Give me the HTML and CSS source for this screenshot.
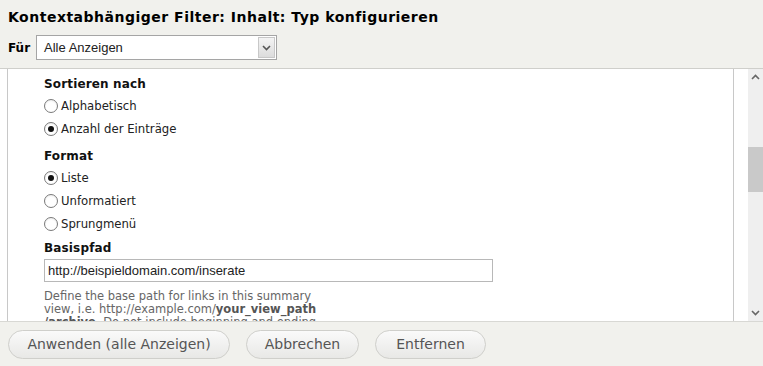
FILE: index.html
```html
<!DOCTYPE html>
<html lang="de">
<head>
<meta charset="utf-8">
<title>Kontextabhängiger Filter</title>
<link rel="stylesheet" href="styles.css">
</head>
<body>
<div class="header">
  <h1 class="title">Kontextabhängiger Filter: Inhalt: Typ konfigurieren</h1>
  <div class="for-row">
    <span class="for-label">Für</span>
    <div class="select">
      <span class="select-text">Alle Anzeigen</span>
      <span class="select-btn"><svg width="9" height="6" viewBox="0 0 9 6"><path d="M1 1 L4.5 4.5 L8 1" fill="none" stroke="#555" stroke-width="1.6"/></svg></span>
    </div>
  </div>
</div>
<div class="main">
  <div class="panel">
    <div class="form">
      <div class="heading">Sortieren nach</div>
      <label class="radio-row"><span class="radio"></span>Alphabetisch</label>
      <label class="radio-row"><span class="radio checked"></span>Anzahl der Einträge</label>
      <div class="heading heading-format">Format</div>
      <label class="radio-row"><span class="radio checked"></span>Liste</label>
      <label class="radio-row"><span class="radio"></span>Unformatiert</label>
      <label class="radio-row"><span class="radio"></span>Sprungmenü</label>
      <div class="heading heading-path">Basispfad</div>
      <div class="text-input">http://beispieldomain.com/inserate</div>
      <div class="desc">Define the base path for links in this summary view, i.e. http://example.com/<strong>your_view_path<wbr>/archive</strong>. Do not include beginning and ending forward slash. If this value is empty, views will use the first path found as the base path, in page displays, or / if no path could be found.</div>
    </div>
  </div>
  <div class="scrollbar">
    <span class="arrow"><svg width="9" height="6" viewBox="0 0 9 6"><path d="M1 5 L4.5 1.5 L8 5" fill="none" stroke="#666" stroke-width="1.6"/></svg></span>
    <div class="track"><div class="thumb"></div></div>
    <span class="arrow"><svg width="9" height="6" viewBox="0 0 9 6"><path d="M1 1 L4.5 4.5 L8 1" fill="none" stroke="#666" stroke-width="1.6"/></svg></span>
  </div>
</div>
<div class="footer">
  <button class="btn btn-apply">Anwenden (alle Anzeigen)</button>
  <button class="btn btn-cancel">Abbrechen</button>
  <button class="btn btn-remove">Entfernen</button>
</div>
</body>
</html>
```
FILE: styles.css
```css
html, body {
  margin: 0;
  padding: 0;
}
body {
  width: 763px;
  height: 366px;
  overflow: hidden;
  background: #f1f1ed;
  font-family: "DejaVu Sans", Verdana, sans-serif;
  color: #222;
}
.header {
  height: 68px;
  padding: 0 8px;
  box-sizing: border-box;
}
.title {
  margin: 0;
  padding-top: 7px;
  font-size: 14px;
  font-weight: bold;
  letter-spacing: 0.5px;
  line-height: 21px;
  color: #000;
  white-space: nowrap;
}
.for-row {
  display: flex;
  align-items: center;
  margin-top: 7px;
  gap: 6px;
}
.for-label {
  font-weight: bold;
  font-size: 12px;
  color: #000;
}
.select {
  width: 241px;
  height: 25px;
  box-sizing: border-box;
  border: 1px solid #a5a5a5;
  background: #fff;
  display: flex;
  align-items: center;
  justify-content: space-between;
}
.select-text {
  font-family: "Liberation Sans", Arial, sans-serif;
  font-size: 13px;
  color: #222;
  padding-left: 7px;
}
.select-btn {
  width: 17px;
  height: 21px;
  margin-right: 1px;
  border: 1px solid #c8c8c8;
  box-sizing: border-box;
  background: linear-gradient(#f4f4f4, #dcdcdc);
  display: flex;
  align-items: center;
  justify-content: center;
}
.main {
  height: 254px;
  box-sizing: border-box;
  border-top: 1px solid #cfcfcb;
  border-bottom: 1px solid #d8d8d4;
  background: #fff;
  display: flex;
  padding-left: 7px;
}
.panel {
  width: 727px;
  box-sizing: border-box;
  border-left: 1px solid #c8c8c8;
  border-right: 1px solid #c8c8c8;
  overflow: hidden;
}
.form {
  padding: 5px 0 0 36px;
  font-size: 11.7px;
  color: #222;
}
.heading {
  font-weight: bold;
  font-size: 12px;
  letter-spacing: 0.15px;
  line-height: 20px;
  color: #111;
}
.heading-format {
  margin-top: 6px;
}
.heading-path {
  margin-top: 3px;
}
.radio-row {
  display: flex;
  align-items: center;
  height: 23px;
}
.radio {
  width: 12px;
  height: 12px;
  border: 1px solid #7a7a7a;
  border-radius: 50%;
  background: radial-gradient(circle at 50% 60%, #fff 50%, #e2e2e2 100%);
  margin-right: 3px;
  position: relative;
  flex: none;
}
.radio.checked::after {
  content: "";
  position: absolute;
  left: 3px;
  top: 3px;
  width: 6px;
  height: 6px;
  border-radius: 50%;
  background: #111;
}
.text-input {
  margin-top: 1px;
  width: 449px;
  height: 23px;
  box-sizing: border-box;
  border: 1px solid #b8b8b8;
  font-family: "Liberation Sans", Arial, sans-serif;
  font-size: 13px;
  line-height: 21px;
  padding-left: 3px;
  color: #222;
}
.desc {
  margin-top: 8px;
  width: 290px;
  font-size: 11.5px;
  line-height: 13px;
  color: #666;
}
.desc strong {
  color: #555;
}
.scrollbar {
  margin-left: 14px;
  width: 15px;
  background: #efefef;
  display: flex;
  flex-direction: column;
  align-items: center;
}
.arrow {
  height: 16px;
  display: flex;
  align-items: center;
  justify-content: center;
}
.track {
  flex: 1;
  width: 100%;
  position: relative;
}
.thumb {
  margin-top: 62px;
  height: 45px;
  background: #c9c9c9;
}
.footer {
  height: 44px;
  display: flex;
  align-items: center;
  padding-left: 8px;
  gap: 16px;
}
.btn {
  height: 29px;
  border: 1px solid #cfcfcb;
  border-radius: 15px;
  background: linear-gradient(#fafafa, #e8e8e6);
  font-family: "DejaVu Sans", Verdana, sans-serif;
  font-size: 14px;
  color: #555;
  padding: 0 10px;
}
.btn-apply { width: 222px; }
.btn-cancel { width: 113px; }
.btn-remove { width: 111px; }
```
